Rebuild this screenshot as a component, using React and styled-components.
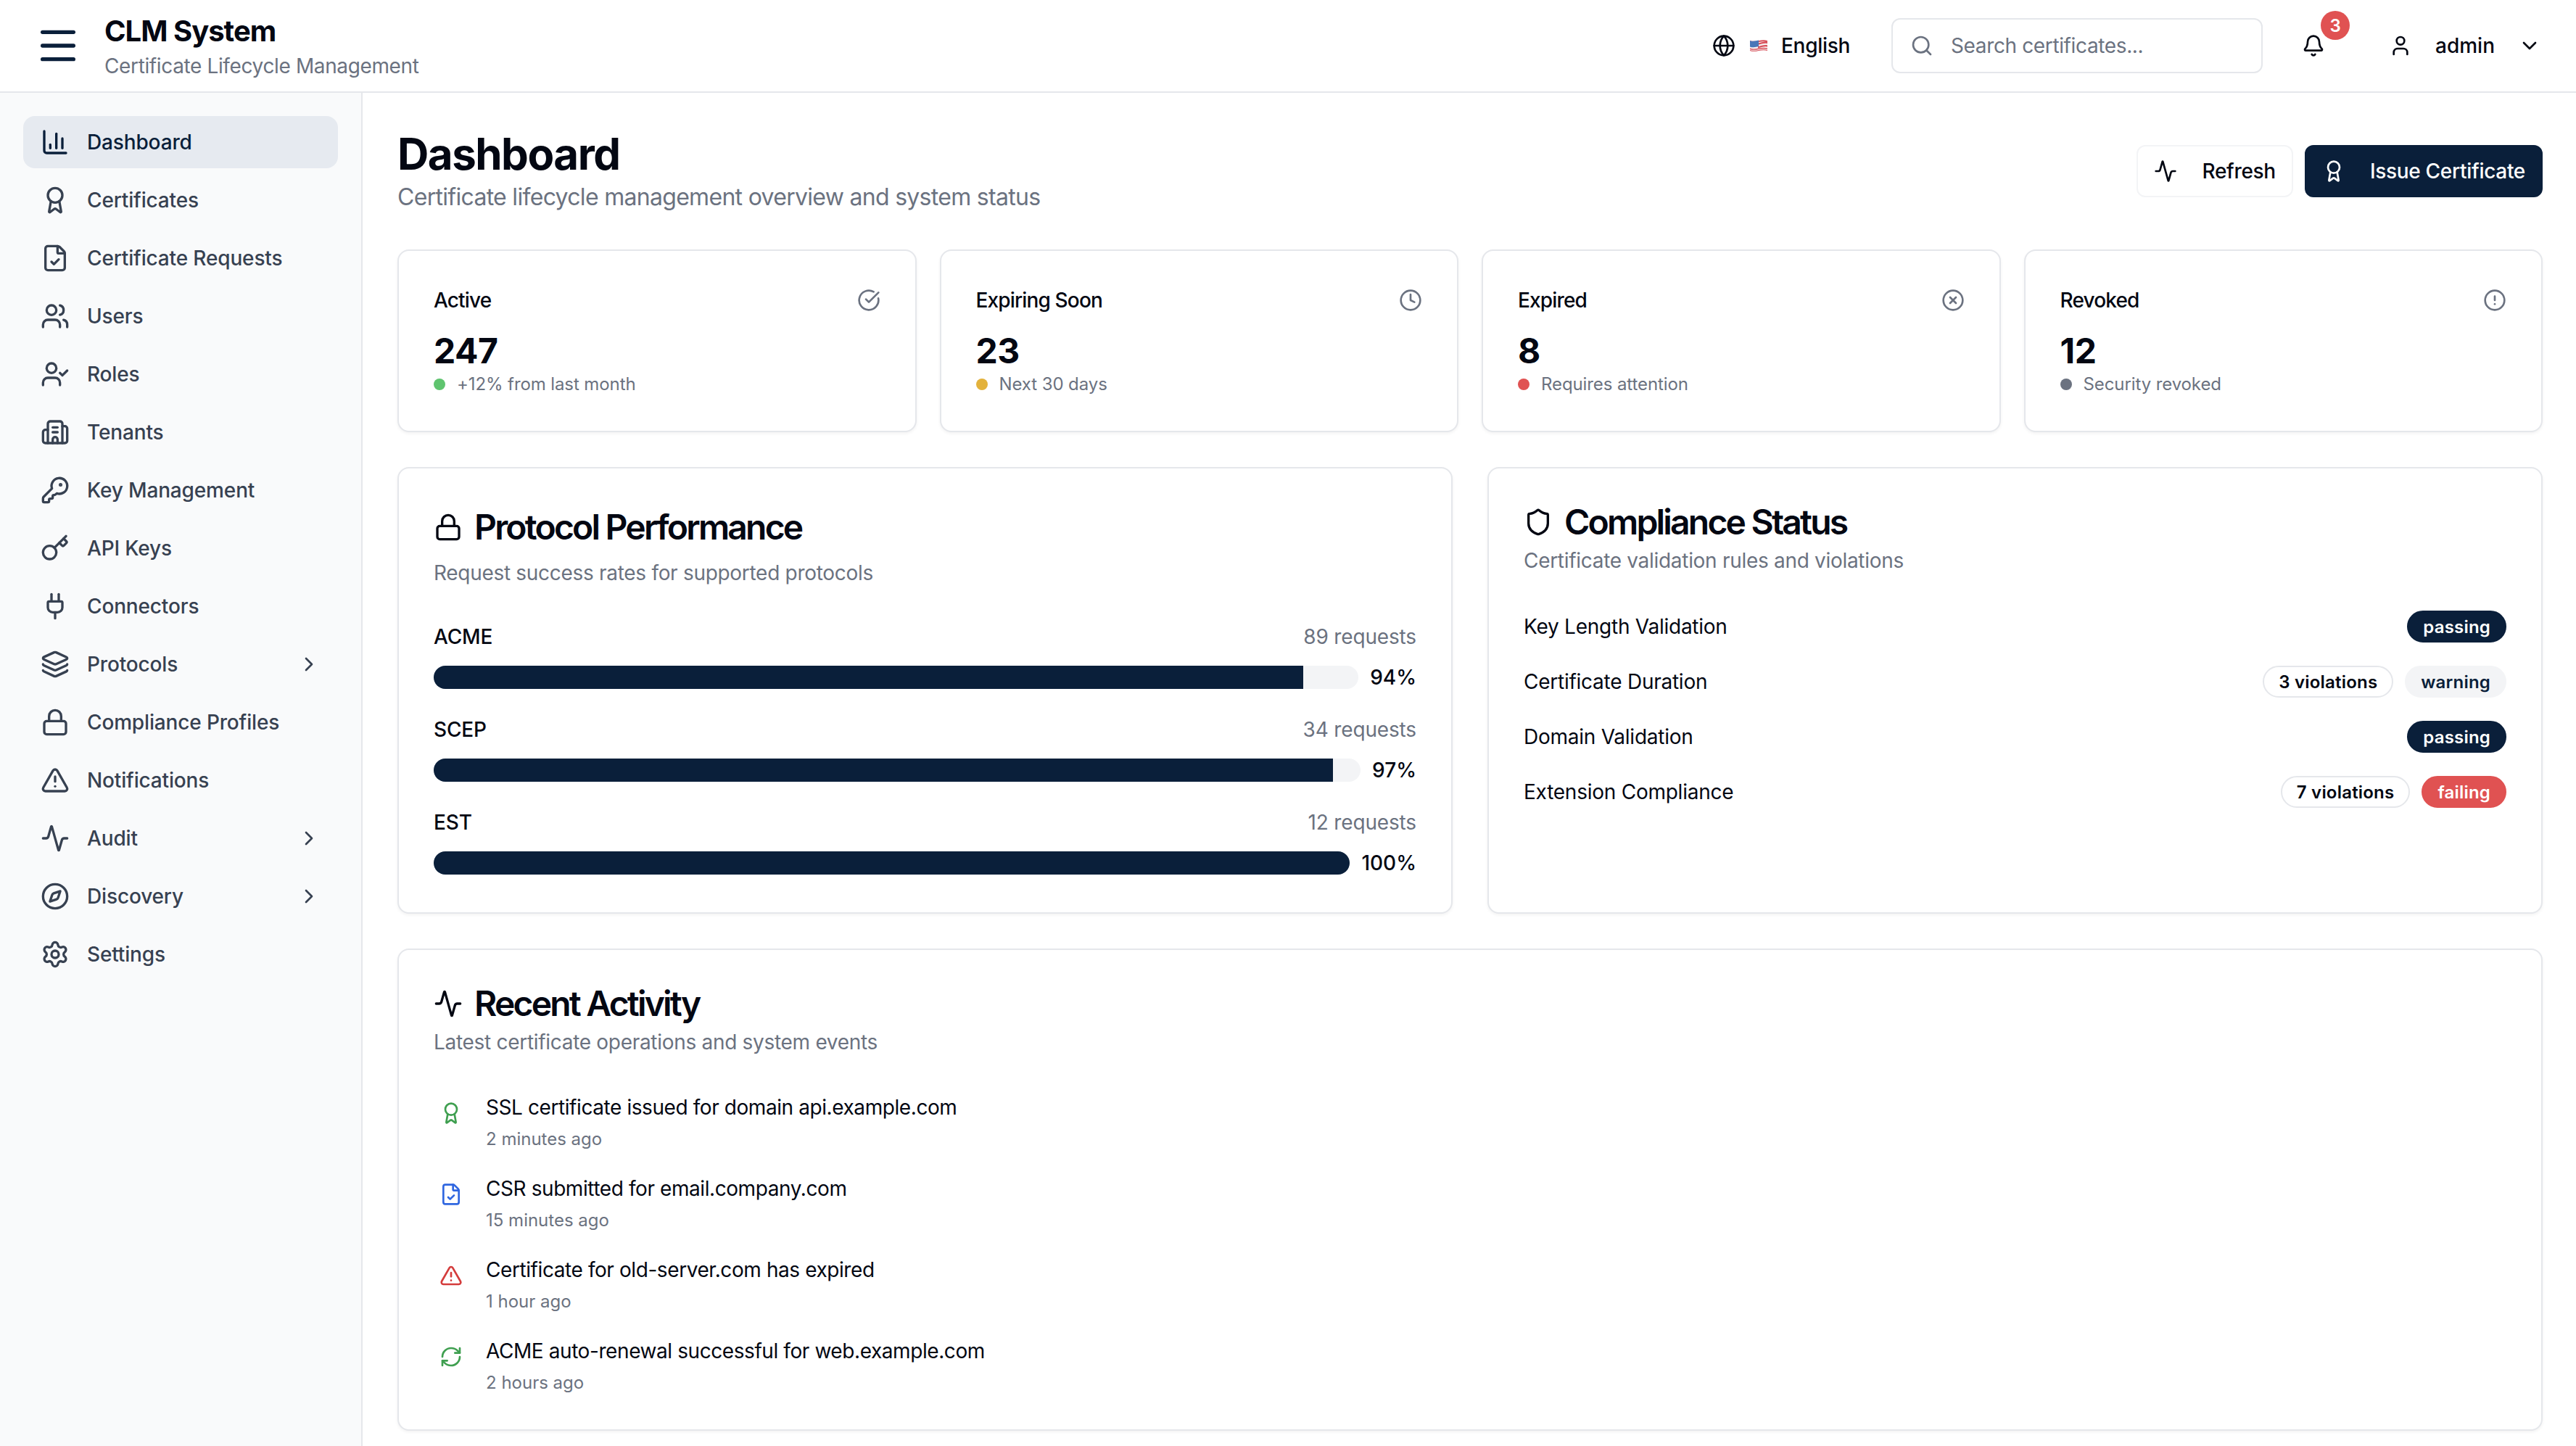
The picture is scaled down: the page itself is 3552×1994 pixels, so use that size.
import React from 'react'
import styled, { createGlobalStyle } from 'styled-components'
import {
  Activity, Award, Bell, Building2, ChartColumn, ChevronDown, ChevronRight, CircleAlert,
  CircleCheckBig, CircleX, Clock, Compass, FileCheck, Globe, Key, KeyRound, Layers, Lock,
  Menu, Plug, RefreshCw, Search, Settings, Shield, TriangleAlert, User, UserCheck, Users
} from 'lucide-react'

const navy = '#0a1f3a'
const ink = '#030712'
const grey = '#6b7280'
const line = '#e5e7eb'

const GlobalStyle = createGlobalStyle`
  * { box-sizing: border-box; }
  html, body { margin: 0; height: 100%; overflow: hidden; background: #fff; }
  body { font-family: Inter, "Noto Sans", sans-serif; color: ${ink}; }
`

const Shell = styled.div`
  height: 100vh;
  display: flex;
  flex-direction: column;
  overflow: hidden;
`

const Header = styled.header`
  height: 128px;
  flex: none;
  display: flex;
  align-items: center;
  padding: 0 48px;
  border-bottom: 2px solid ${line};
  background: #fff;
`

const MenuButton = styled.div`
  display: flex;
  color: ${navy};
  margin-right: 32px;
`

const Brand = styled.div`
  display: flex;
  flex-direction: column;
  gap: 4px;
  margin-top: 4px;
`

const BrandName = styled.div`
  font-size: 40px;
  line-height: 48px;
  font-weight: 700;
  letter-spacing: -1px;
`

const BrandTag = styled.div`
  font-size: 28px;
  line-height: 40px;
  letter-spacing: -.37px;
  color: ${grey};
`

const HeaderRight = styled.div`
  margin-left: auto;
  display: flex;
  align-items: center;
`

const LangSwitch = styled.div`
  display: flex;
  align-items: center;
  gap: 20px;
  font-size: 28px;
  font-weight: 500;
  letter-spacing: -.3px;
  margin-right: 57px;
`

const LangName = styled.span`
  margin-left: -2px;
`

const SearchBox = styled.div`
  width: 512px;
  height: 76px;
  display: flex;
  align-items: center;
  gap: 24px;
  padding: 0 24px;
  border: 2px solid ${line};
  border-radius: 12px;
  color: ${grey};
  font-size: 28px;
  letter-spacing: -.37px;
`

const BellWrap = styled.div`
  position: relative;
  display: flex;
  margin-left: 54px;
  margin-right: 88px;
`

const BellBadge = styled.span`
  position: absolute;
  top: -32px;
  left: 26px;
  width: 40px;
  height: 40px;
  border-radius: 50%;
  background: #e05252;
  color: #fff;
  font-size: 24px;
  font-weight: 600;
  display: flex;
  align-items: center;
  justify-content: center;
`

const UserMenu = styled.div`
  display: flex;
  align-items: center;
  gap: 32px;
  font-size: 28px;
  font-weight: 500;
`

const Body = styled.div`
  flex: 1;
  display: flex;
  min-height: 0;
`

const Sidebar = styled.nav`
  width: 500px;
  flex: none;
  padding: 32px;
  display: flex;
  flex-direction: column;
  gap: 8px;
  background: #f9fafb;
  border-right: 2px solid ${line};
`

const NavItem = styled.div`
  height: 72px;
  display: flex;
  align-items: center;
  gap: 24px;
  padding: 0 24px;
  border-radius: 16px;
  font-size: 28px;
  font-weight: 500;
  letter-spacing: -.15px;
  color: ${p => p.$active ? navy : '#374151'};
  background: ${p => p.$active ? '#e6eaf0' : 'transparent'};
  svg { flex: none; }
`

const NavLabel = styled.span`
  flex: 1;
`

const Main = styled.main`
  flex: 1;
  min-width: 0;
  padding: 48px 46px 48px 48px;
  display: flex;
  flex-direction: column;
  gap: 48px;
`

const PageHead = styled.div`
  display: flex;
  align-items: center;
  justify-content: space-between;
`

const PageTitle = styled.h1`
  margin: 0;
  font-size: 60px;
  line-height: 72px;
  font-weight: 700;
  letter-spacing: -1.5px;
`

const PageSub = styled.div`
  font-size: 32px;
  line-height: 48px;
  letter-spacing: -.7px;
  color: ${grey};
`

const Actions = styled.div`
  display: flex;
  gap: 16px;
`

const Button = styled.div`
  height: 72px;
  display: flex;
  align-items: center;
  gap: 34px;
  padding: 0 22px;
  border-radius: 12px;
  font-size: 28px;
  font-weight: 500;
  letter-spacing: -.3px;
  color: ${p => p.$primary ? '#fff' : ink};
  background: ${p => p.$primary ? navy : '#fff'};
  border: 2px solid ${p => p.$primary ? navy : '#f3f4f6'};
`

const StatGrid = styled.div`
  display: grid;
  grid-template-columns: repeat(4, 1fr);
  gap: 32px;
`

const Card = styled.section`
  background: #fff;
  border: 2px solid ${line};
  border-radius: 16px;
  padding: 48px;
  box-shadow: 0 2px 4px rgba(0, 0, 0, .05);
`

const StatTop = styled.div`
  height: 40px;
  display: flex;
  align-items: center;
  justify-content: space-between;
  margin-bottom: 19px;
  font-size: 28px;
  font-weight: 500;
  letter-spacing: -.85px;
  color: ${ink};
  svg { color: ${grey}; }
`

const StatValue = styled.div`
  font-size: 48px;
  line-height: 61px;
  font-weight: 700;
  letter-spacing: -.5px;
`

const StatNote = styled.div`
  display: flex;
  align-items: center;
  gap: 16px;
  font-size: 24px;
  line-height: 32px;
  letter-spacing: -.1px;
  color: ${grey};
`

const Dot = styled.span`
  width: 16px;
  height: 16px;
  border-radius: 50%;
  background: ${p => p.$color};
`

const TwoCol = styled.div`
  display: grid;
  grid-template-columns: 1fr 1fr;
  gap: 48px;
`

const CardTitle = styled.h2`
  margin: 0 0 ${p => p.$tall ? '10px' : '7px'};
  display: flex;
  align-items: center;
  gap: 16px;
  font-size: 48px;
  line-height: ${p => p.$tall ? '66px' : '52px'};
  font-weight: 600;
  letter-spacing: -2.8px;
`

const CardSub = styled.div`
  font-size: 28px;
  line-height: 40px;
  letter-spacing: -.3px;
  color: ${grey};
  margin-bottom: 48px;
`

const ProtoList = styled.div`
  display: flex;
  flex-direction: column;
  gap: 32px;
`

const ProtoHead = styled.div`
  display: flex;
  justify-content: space-between;
  font-size: 28px;
  line-height: 40px;
  font-weight: 500;
  letter-spacing: -.15px;
  margin-bottom: 16px;
`

const ProtoCount = styled.span`
  font-weight: 400;
  color: ${grey};
`

const BarRow = styled.div`
  height: 40px;
  display: flex;
  align-items: center;
  gap: 16px;
  font-size: 28px;
  font-weight: 500;
`

const Track = styled.div`
  flex: 1;
  height: 32px;
  border-radius: 16px;
  overflow: hidden;
  background: #f3f4f6;
`

const Fill = styled.div`
  height: 100%;
  background: ${navy};
`

const RuleList = styled.div`
  display: flex;
  flex-direction: column;
  gap: 32px;
  padding-top: 1px;
`

const Rule = styled.div`
  height: 44px;
  display: flex;
  align-items: center;
  justify-content: space-between;
  font-size: 28px;
  font-weight: 400;
  letter-spacing: -.25px;
`

const Badges = styled.div`
  display: flex;
  gap: 16px;
  letter-spacing: .2px;
`

const badgeColors = {
  passing: { bg: navy, fg: '#fff', bd: navy },
  warning: { bg: '#f3f4f6', fg: navy, bd: '#f3f4f6' },
  failing: { bg: '#e05252', fg: '#fff', bd: '#e05252' },
  outline: { bg: '#fff', fg: ink, bd: line }
}

const Badge = styled.span`
  height: 44px;
  display: flex;
  align-items: center;
  padding: 0 20px;
  border-radius: 22px;
  font-size: 24px;
  font-weight: 600;
  background: ${p => badgeColors[p.$kind].bg};
  color: ${p => badgeColors[p.$kind].fg};
  border: 2px solid ${p => badgeColors[p.$kind].bd};
`

const Events = styled.div`
  display: flex;
  flex-direction: column;
  gap: 32px;
  padding-top: 2px;
`

const EventRow = styled.div`
  display: flex;
  gap: 24px;
`

const EventIcon = styled.div`
  display: flex;
  padding: 8px;
  margin-top: 4px;
  height: 48px;
  color: ${p => p.$color};
`

const EventText = styled.div`
  font-size: 28px;
  line-height: 40px;
  font-weight: 400;
  letter-spacing: -.42px;
`

const EventTime = styled.div`
  font-size: 24px;
  line-height: 32px;
  margin-top: 8px;
  color: ${grey};
`

const FlagSvg = () => (
  <svg width="26" height="20" viewBox="0 0 26 20" style={{ marginLeft: -1 }}>
    <path d="M1 3c8 3 16-3 24 0v14c-8-3-16 3-24 0z" fill="#f6f0f0" />
    <path d="M1 3c8 3 16-3 24 0v2c-8-3-16 3-24 0zM12 6.5c4-.6 9-3 13-1.7v2.4c-4-1.3-9 1-13 1.6zM12 11c4-.6 9-3 13-1.7v2.4c-4-1.3-9 1-13 1.6zM1 13.600c8 3 16-3 24 0v1.400c-8-3-16 3-24 0zM1 16c8 3 16-3 24 0v1c-8-3-16 3-24 0z" fill="#d8505a" />
    <path d="M1 3c4 1.500 8 .7 12-.4v8.400c-4 1.100-8 1.900-12 .4z" fill="#4a77b8" />
  </svg>
)

const navItems = [
  { label: 'Dashboard', icon: ChartColumn, active: true },
  { label: 'Certificates', icon: Award },
  { label: 'Certificate Requests', icon: FileCheck },
  { label: 'Users', icon: Users },
  { label: 'Roles', icon: UserCheck },
  { label: 'Tenants', icon: Building2 },
  { label: 'Key Management', icon: KeyRound },
  { label: 'API Keys', icon: Key },
  { label: 'Connectors', icon: Plug },
  { label: 'Protocols', icon: Layers, more: true },
  { label: 'Compliance Profiles', icon: Lock },
  { label: 'Notifications', icon: TriangleAlert },
  { label: 'Audit', icon: Activity, more: true },
  { label: 'Discovery', icon: Compass, more: true },
  { label: 'Settings', icon: Settings }
]

const stats = [
  { label: 'Active', value: '247', note: '+12% from last month', dot: '#5fc46f', icon: CircleCheckBig },
  { label: 'Expiring Soon', value: '23', note: 'Next 30 days', dot: '#e3b23c', icon: Clock },
  { label: 'Expired', value: '8', note: 'Requires attention', dot: '#e05252', icon: CircleX },
  { label: 'Revoked', value: '12', note: 'Security revoked', dot: grey, icon: CircleAlert }
]

const protocols = [
  { name: 'ACME', count: 89, rate: 94 },
  { name: 'SCEP', count: 34, rate: 97 },
  { name: 'EST', count: 12, rate: 100 }
]

const rules = [
  { name: 'Key Length Validation', status: 'passing' },
  { name: 'Certificate Duration', status: 'warning', violations: 3 },
  { name: 'Domain Validation', status: 'passing' },
  { name: 'Extension Compliance', status: 'failing', violations: 7 }
]

const events = [
  { text: 'SSL certificate issued for domain api.example.com', time: '2 minutes ago', icon: Award, color: '#3f9f50' },
  { text: 'CSR submitted for email.company.com', time: '15 minutes ago', icon: FileCheck, color: '#2f66e0' },
  { text: 'Certificate for old-server.com has expired', time: '1 hour ago', icon: TriangleAlert, color: '#d43c3c' },
  { text: 'ACME auto-renewal successful for web.example.com', time: '2 hours ago', icon: RefreshCw, color: '#3f9f50' }
]

export default function App () {
  return (
    <Shell>
      <GlobalStyle />
      <Header>
        <MenuButton><Menu size={64} /></MenuButton>
        <Brand>
          <BrandName>CLM System</BrandName>
          <BrandTag>Certificate Lifecycle Management</BrandTag>
        </Brand>
        <HeaderRight>
          <LangSwitch>
            <Globe size={32} />
            <FlagSvg />
            <LangName>English</LangName>
          </LangSwitch>
          <SearchBox>
            <Search size={32} />
            <span>Search certificates...</span>
          </SearchBox>
          <BellWrap>
            <Bell size={32} />
            <BellBadge>3</BellBadge>
          </BellWrap>
          <UserMenu>
            <User size={32} />
            <span>admin</span>
            <ChevronDown size={32} />
          </UserMenu>
        </HeaderRight>
      </Header>
      <Body>
        <Sidebar>
          {navItems.map(({ label, icon: Icon, active, more }) => (
            <NavItem key={label} $active={active}>
              <Icon size={40} />
              <NavLabel>{label}</NavLabel>
              {more && <ChevronRight size={32} />}
            </NavItem>
          ))}
        </Sidebar>
        <Main>
          <PageHead>
            <div>
              <PageTitle>Dashboard</PageTitle>
              <PageSub>Certificate lifecycle management overview and system status</PageSub>
            </div>
            <Actions>
              <Button><Activity size={32} />Refresh</Button>
              <Button $primary><Award size={32} />Issue Certificate</Button>
            </Actions>
          </PageHead>

          <StatGrid>
            {stats.map(({ label, value, note, dot, icon: Icon }) => (
              <Card key={label}>
                <StatTop>{label}<Icon size={32} /></StatTop>
                <StatValue>{value}</StatValue>
                <StatNote><Dot $color={dot} />{note}</StatNote>
              </Card>
            ))}
          </StatGrid>

          <TwoCol>
            <Card>
              <CardTitle $tall><Lock size={40} />Protocol Performance</CardTitle>
              <CardSub>Request success rates for supported protocols</CardSub>
              <ProtoList>
                {protocols.map(({ name, count, rate }) => (
                  <div key={name}>
                    <ProtoHead>{name}<ProtoCount>{count} requests</ProtoCount></ProtoHead>
                    <BarRow>
                      <Track><Fill style={{ width: `${rate}%` }} /></Track>
                      {rate}%
                    </BarRow>
                  </div>
                ))}
              </ProtoList>
            </Card>
            <Card>
              <CardTitle><Shield size={40} />Compliance Status</CardTitle>
              <CardSub>Certificate validation rules and violations</CardSub>
              <RuleList>
                {rules.map(({ name, status, violations }) => (
                  <Rule key={name}>
                    {name}
                    <Badges>
                      {violations && <Badge $kind='outline'>{violations} violations</Badge>}
                      <Badge $kind={status}>{status}</Badge>
                    </Badges>
                  </Rule>
                ))}
              </RuleList>
            </Card>
          </TwoCol>

          <Card>
            <CardTitle><Activity size={40} />Recent Activity</CardTitle>
            <CardSub>Latest certificate operations and system events</CardSub>
            <Events>
              {events.map(({ text, time, icon: Icon, color }) => (
                <EventRow key={text}>
                  <EventIcon $color={color}><Icon size={32} /></EventIcon>
                  <div>
                    <EventText>{text}</EventText>
                    <EventTime>{time}</EventTime>
                  </div>
                </EventRow>
              ))}
            </Events>
          </Card>
        </Main>
      </Body>
    </Shell>
  )
}
